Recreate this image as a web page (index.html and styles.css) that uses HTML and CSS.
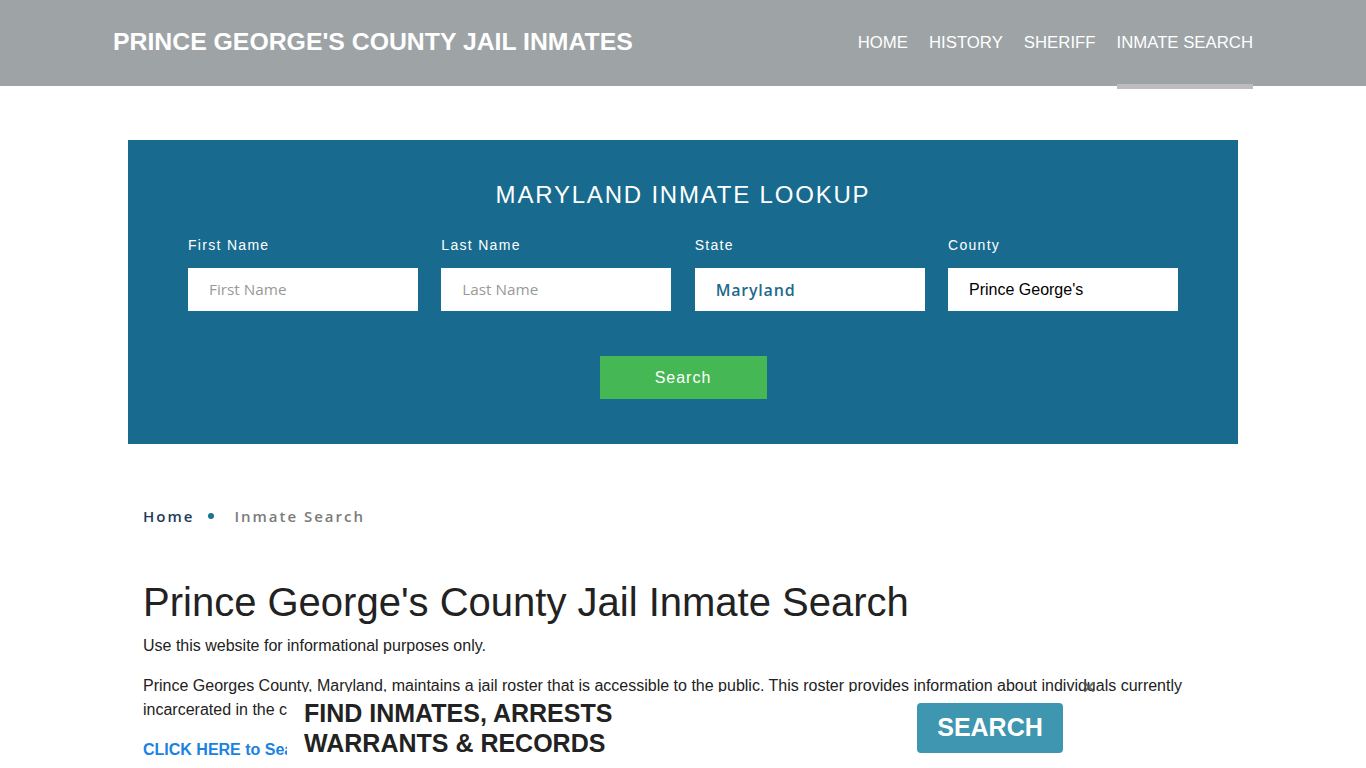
FILE: index.html
```html
<!DOCTYPE html>
<html lang="en">
<head>
<meta charset="utf-8">
<title>Prince George's County Jail Inmate Search</title>
<link rel="stylesheet" href="styles.css">
</head>
<body>
<header class="site-header">
  <div class="header-inner">
    <a class="brand" href="#">PRINCE GEORGE'S COUNTY JAIL INMATES</a>
    <nav class="nav">
      <a href="#" class="nav-link">HOME</a>
      <a href="#" class="nav-link">HISTORY</a>
      <a href="#" class="nav-link">SHERIFF</a>
      <a href="#" class="nav-link active">INMATE SEARCH</a>
    </nav>
  </div>
</header>

<main class="container">
  <section class="lookup">
    <h2 class="lookup-title">MARYLAND INMATE LOOKUP</h2>
    <div class="fields">
      <div class="field">
        <label class="field-label">First Name</label>
        <div class="input placeholder">First Name</div>
      </div>
      <div class="field">
        <label class="field-label">Last Name</label>
        <div class="input placeholder">Last Name</div>
      </div>
      <div class="field">
        <label class="field-label">State</label>
        <div class="input state">Maryland</div>
      </div>
      <div class="field">
        <label class="field-label">County</label>
        <div class="input county">Prince George's</div>
      </div>
    </div>
    <div class="actions">
      <button class="search-btn">Search</button>
    </div>
  </section>

  <nav class="breadcrumb">
    <a href="#" class="crumb-home">Home</a>
    <span class="crumb-dot"></span>
    <span class="crumb-current">Inmate Search</span>
  </nav>

  <article class="content">
    <h1 class="page-title">Prince George's County Jail Inmate Search</h1>
    <p>Use this website for informational purposes only.</p>
    <p>Prince Georges County, Maryland, maintains a jail roster that is accessible to the public. This roster provides information about individuals currently incarcerated in the county jail, including their names, booking dates, charges and bail amounts.</p>
    <p><a href="#" class="cta-link">CLICK HERE to Search Prince George's County Jail Inmates</a></p>
  </article>
</main>

<div class="ad-bar">
  <div class="ad-text">FIND INMATES, ARRESTS<br>WARRANTS &amp; RECORDS</div>
  <a href="#" class="ad-btn">SEARCH</a>
  <span class="ad-close"><svg width="12" height="12" viewBox="0 0 12 12"><path d="M2 2 L10 10 M10 2 L2 10" stroke="#555" stroke-width="2.4" stroke-linecap="round" opacity="0.8"/></svg></span>
</div>
</body>
</html>
```
FILE: styles.css
```css
* { box-sizing: border-box; }
html, body { margin: 0; padding: 0; }
body {
  font-family: "Liberation Sans", Arial, sans-serif;
  font-size: 16px;
  color: #222;
  background: #fff;
  line-height: 1.5;
}
a { text-decoration: none; }

.site-header {
  background: #9ea3a6;
  height: 86px;
}
.header-inner {
  width: 1140px;
  margin: 0 auto;
  height: 100%;
  display: flex;
  justify-content: space-between;
  align-items: stretch;
}
.brand {
  align-self: center;
  color: #fff;
  font-weight: bold;
  font-size: 24.8px;
  line-height: 1;
  padding-bottom: 1px;
}
.nav {
  display: flex;
  gap: 21px;
  align-items: stretch;
}
.nav-link {
  display: flex;
  align-items: center;
  color: #fff;
  font-size: 16.75px;
  padding-top: 1px;
  border-bottom: 5px solid transparent;
  margin-bottom: -3px;
}
.nav-link.active { border-bottom-color: #bdbdbd; }

.container {
  width: 1110px;
  margin: 0 auto;
}

.lookup {
  margin-top: 54px;
  background: #186b8e;
  padding: 40px 60px 45px;
}
.lookup-title {
  margin: 0 0 28px;
  text-align: center;
  color: #fff;
  font-weight: normal;
  font-size: 24px;
  line-height: 29px;
  letter-spacing: 1.8px;
}
.fields {
  display: grid;
  grid-template-columns: repeat(4, 230px);
  justify-content: space-between;
}
.field-label {
  display: block;
  color: #fff;
  font-size: 14px;
  line-height: 17px;
  letter-spacing: 1.3px;
  margin-bottom: 14px;
}
.input {
  height: 43px;
  background: #fff;
  display: flex;
  align-items: center;
  padding-left: 21px;
}
.input.placeholder {
  font-family: "Open Sans", sans-serif;
  font-size: 15.3px;
  font-weight: 500;
  color: #999;
}
.input.state {
  font-family: "Open Sans", sans-serif;
  font-weight: 600;
  font-size: 16px;
  letter-spacing: 0.8px;
  color: #1e6a8c;
  padding-top: 1px;
}
.input.county {
  font-size: 16px;
  color: #000;
}
.actions {
  display: flex;
  justify-content: center;
  margin-top: 45px;
}
.search-btn {
  width: 167px;
  height: 43px;
  border: 0;
  background: #45b754;
  color: #fff;
  font-family: "Liberation Sans", Arial, sans-serif;
  font-size: 16px;
  letter-spacing: 1px;
}

.breadcrumb {
  margin-top: 62px;
  padding-left: 15px;
  display: flex;
  align-items: center;
  font-family: "Open Sans", sans-serif;
  font-weight: 600;
  font-size: 15px;
  line-height: 20px;
  letter-spacing: 2px;
}
.crumb-home { color: #1f3a5a; }
.crumb-dot {
  width: 6px;
  height: 6px;
  border-radius: 50%;
  background: #1a7592;
  margin: 0 20px 0 14px;
}
.crumb-current { color: #7b7b7b; }

.content {
  padding: 0 15px;
  margin-top: 52px;
}
.page-title {
  margin: 0 0 8px;
  font-weight: normal;
  font-size: 40px;
  line-height: 48px;
  color: #222;
}
.content p {
  margin: 0 0 16px;
  line-height: 24px;
}
.cta-link {
  color: #1a82e2;
  font-weight: bold;
}

.ad-bar {
  position: fixed;
  bottom: 0;
  left: 50%;
  margin-left: -396px;
  width: 792px;
  height: 76px;
  background: #fff;
  display: flex;
  justify-content: space-between;
  align-items: flex-start;
  padding: 6px 16px 0 17px;
}
.ad-text {
  font-weight: bold;
  font-size: 25px;
  line-height: 30px;
  color: #222;
}
.ad-btn {
  margin-top: 5px;
  width: 146px;
  height: 50px;
  border-radius: 4px;
  background: #3e96b0;
  color: #fff;
  font-weight: bold;
  font-size: 25px;
  display: flex;
  align-items: center;
  justify-content: center;
}
.ad-close {
  position: absolute;
  top: -11px;
  right: -16px;
  width: 12px;
  height: 12px;
  display: block;
  line-height: 0;
}
```
